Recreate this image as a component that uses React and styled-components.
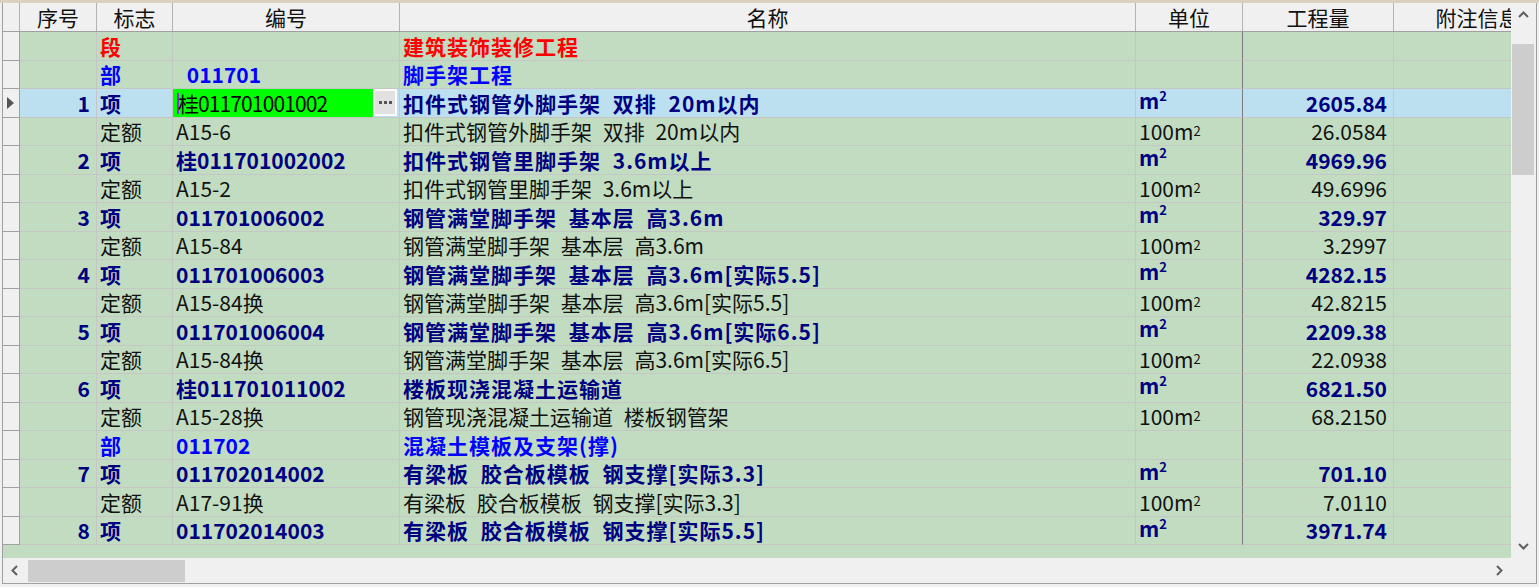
import React from "react";
import styled, { createGlobalStyle } from "styled-components";

const COLS = "17px 77px 76px 227px 736px 107px 151px 168px";

const GREEN = "#c1dcc1";
const BLUE_SEL = "#bde0f1";
const LINE = "#c6c6c6";

const Global = createGlobalStyle`
  html, body { margin: 0; padding: 0; background: #f0f0f0; }
  body { font-family: "Noto Sans CJK SC", "Noto Sans", sans-serif; }
  * { box-sizing: border-box; }
`;

const Frame = styled.div`
  width: 1539px;
  height: 587px;
  background: #f0f0f0;
  border-top: 3px solid #d9d2bf;
  padding: 0 2px 3px 2px;
  display: flex;
`;

const Inner = styled.div`
  flex: 1;
  border-left: 1px solid #a0a0a0;
  border-right: 1px solid #a0a0a0;
  border-bottom: 1px solid #a0a0a0;
  display: grid;
  grid-template-columns: 1fr 25px;
  grid-template-rows: 1fr 25px;
  min-width: 0;
`;

const Viewport = styled.div`
  background: ${GREEN};
  overflow: hidden;
  min-width: 0;
`;

const Table = styled.div`
  width: max-content;
`;

const HeaderRow = styled.div`
  display: grid;
  grid-template-columns: ${COLS};
  height: 29px;
  background: #f0f0f0;
  border-bottom: 1px solid #a0a0a0;
`;

const HeaderCell = styled.div`
  border-right: 1px solid #b4b4b4;
  display: flex;
  align-items: center;
  justify-content: center;
  font-size: 21px;
  color: #111;
  white-space: nowrap;
  overflow: hidden;
  line-height: 1;
  padding-top: 1px;
`;

const Row = styled.div`
  display: grid;
  grid-template-columns: ${COLS};
  height: ${(p) => p.$h}px;
  background: ${(p) => (p.$selected ? BLUE_SEL : GREEN)};
`;

const toneColor = {
  seg: "#ff0000",
  part: "#0000ff",
  item: "#000080",
  quota: "#111111",
};

const Cell = styled.div`
  border-right: 1px solid ${(p) => (p.$dark ? "#7a7a7a" : LINE)};
  border-bottom: 1px solid ${LINE};
  display: flex;
  align-items: ${(p) => (p.$top ? "flex-start" : "center")};
  justify-content: ${(p) => (p.$align === "right" ? "flex-end" : "flex-start")};
  padding: ${(p) => (p.$top ? "1px" : "0")} ${(p) => (p.$align === "right" ? "6px" : "3px")} 0 3px;
  font-size: 21px;
  line-height: 1;
  white-space: pre;
  word-spacing: 6px;
  overflow: hidden;
  color: ${(p) => toneColor[p.$tone] || "#000"};
  font-weight: ${(p) => (p.$tone === "quota" ? 400 : 700)};
  letter-spacing: ${(p) => (p.$spread && p.$tone !== "quota" ? "1px" : "0")};
`;

const IndicatorCell = styled.div`
  background: #f0f0f0;
  border-right: 1px solid #a0a0a0;
  border-bottom: 1px solid #a0a0a0;
  display: flex;
  align-items: center;
  padding-left: 4px;
`;

const HeaderIndicator = styled.div`
  border-right: 1px solid #b4b4b4;
`;

const Pointer = styled.span`
  width: 0;
  height: 0;
  border-top: 6px solid transparent;
  border-bottom: 6px solid transparent;
  border-left: 7px solid #555;
`;

const EditCell = styled.div`
  border-right: 1px solid ${LINE};
  border-bottom: 1px solid ${LINE};
  display: flex;
  align-items: stretch;
  padding-right: 2px;
`;

const EditBox = styled.div`
  width: 200px;
  background: #00ff00;
  display: flex;
  align-items: center;
  padding-left: 4px;
  font-size: 21px;
  line-height: 1;
  color: #000;
  white-space: pre;
  letter-spacing: -0.9px;
`;

const Caret = styled.span`
  display: inline-block;
  width: 2px;
  height: 21px;
  background: #8a2be2;
  margin-right: -1px;
`;

const EllipsisButton = styled.div`
  width: 24px;
  margin-bottom: 1px;
  background: #e1e1e1;
  border: 2px solid #fbfbfb;
  display: flex;
  align-items: center;
  justify-content: center;
  gap: 2px;
`;

const Dot = styled.span`
  width: 3px;
  height: 3px;
  background: #555;
`;

const Sup = styled.span`
  font-size: 0.62em;
  vertical-align: top;
  position: relative;
  top: -1px;
`;

const VScroll = styled.div`
  background: #f0f0f0;
  display: flex;
  flex-direction: column;
`;

const HScroll = styled.div`
  background: #f0f0f0;
  display: flex;
  align-items: stretch;
`;

const Corner = styled.div`
  background: #f0f0f0;
`;

const ArrowButton = styled.div`
  flex: 0 0 24px;
  width: ${(p) => (p.$horizontal ? "24px" : "auto")};
  height: ${(p) => (p.$horizontal ? "auto" : "24px")};
  display: flex;
  align-items: center;
  justify-content: center;
`;

const VTrack = styled.div`
  flex: 1;
  padding: 0 2px 0 1px;
`;

const VThumb = styled.div`
  margin-top: ${(p) => p.$offset}px;
  height: ${(p) => p.$size}px;
  background: #cdcdcd;
`;

const HTrack = styled.div`
  flex: 1;
  padding: 2px 0 1px 1px;
  display: flex;
`;

const HThumb = styled.div`
  margin-left: ${(p) => p.$offset}px;
  width: ${(p) => p.$size}px;
  background: #cdcdcd;
`;

const Chevron = ({ dir }) => {
  const pts = {
    up: "1,7 5.5,2.5 10,7",
    down: "1,3 5.5,7.5 10,3",
    left: "7,1 2.5,5.5 7,10",
    right: "3,1 7.5,5.5 3,10",
  }[dir];
  return (
    <svg width="11" height="11" viewBox="0 0 11 11">
      <polyline points={pts} fill="none" stroke="#606060" strokeWidth="2" />
    </svg>
  );
};

const rows = [
  { kind: "seg", flag: "段", name: "建筑装饰装修工程" },
  { kind: "part", flag: "部", code: " 011701", name: "脚手架工程" },
  { kind: "item", no: 1, flag: "项", code: "桂011701001002", name: "扣件式钢管外脚手架 双排 20m以内", qty: "2605.84", selected: true },
  { kind: "quota", flag: "定额", code: "A15-6", name: "扣件式钢管外脚手架 双排 20m以内", qty: "26.0584" },
  { kind: "item", no: 2, flag: "项", code: "桂011701002002", name: "扣件式钢管里脚手架 3.6m以上", qty: "4969.96" },
  { kind: "quota", flag: "定额", code: "A15-2", name: "扣件式钢管里脚手架 3.6m以上", qty: "49.6996" },
  { kind: "item", no: 3, flag: "项", code: "011701006002", name: "钢管满堂脚手架 基本层 高3.6m", qty: "329.97" },
  { kind: "quota", flag: "定额", code: "A15-84", name: "钢管满堂脚手架 基本层 高3.6m", qty: "3.2997" },
  { kind: "item", no: 4, flag: "项", code: "011701006003", name: "钢管满堂脚手架 基本层 高3.6m[实际5.5]", qty: "4282.15" },
  { kind: "quota", flag: "定额", code: "A15-84换", name: "钢管满堂脚手架 基本层 高3.6m[实际5.5]", qty: "42.8215" },
  { kind: "item", no: 5, flag: "项", code: "011701006004", name: "钢管满堂脚手架 基本层 高3.6m[实际6.5]", qty: "2209.38" },
  { kind: "quota", flag: "定额", code: "A15-84换", name: "钢管满堂脚手架 基本层 高3.6m[实际6.5]", qty: "22.0938" },
  { kind: "item", no: 6, flag: "项", code: "桂011701011002", name: "楼板现浇混凝土运输道", qty: "6821.50" },
  { kind: "quota", flag: "定额", code: "A15-28换", name: "钢管现浇混凝土运输道 楼板钢管架", qty: "68.2150" },
  { kind: "part", flag: "部", code: "011702", name: "混凝土模板及支架(撑)" },
  { kind: "item", no: 7, flag: "项", code: "011702014002", name: "有梁板 胶合板模板 钢支撑[实际3.3]", qty: "701.10" },
  { kind: "quota", flag: "定额", code: "A17-91换", name: "有梁板 胶合板模板 钢支撑[实际3.3]", qty: "7.0110" },
  { kind: "item", no: 8, flag: "项", code: "011702014003", name: "有梁板 胶合板模板 钢支撑[实际5.5]", qty: "3971.74" },
];

const headers = ["序号", "标志", "编号", "名称", "单位", "工程量", "附注信息"];

const Unit = ({ kind }) => {
  if (kind === "item")
    return (
      <>
        m<Sup>2</Sup>
      </>
    );
  if (kind === "quota")
    return (
      <>
        100m<Sup>2</Sup>
      </>
    );
  return null;
};

export default function App() {
  return (
    <>
      <Global />
      <Frame>
        <Inner>
          <Viewport>
            <Table>
              <HeaderRow>
                <HeaderIndicator />
                {headers.map((h) => (
                  <HeaderCell key={h}>{h}</HeaderCell>
                ))}
              </HeaderRow>
              {rows.map((r, i) => (
                <Row key={i} $h={i % 2 === 0 ? 29 : 28} $selected={r.selected}>
                  <IndicatorCell>{r.selected && <Pointer />}</IndicatorCell>
                  <Cell $tone={r.kind} $align="right">
                    {r.no ?? ""}
                  </Cell>
                  <Cell $tone={r.kind}>{r.flag}</Cell>
                  {r.selected ? (
                    <EditCell>
                      <EditBox>
                        <Caret />
                        {r.code}
                      </EditBox>
                      <EllipsisButton>
                        <Dot />
                        <Dot />
                        <Dot />
                      </EllipsisButton>
                    </EditCell>
                  ) : (
                    <Cell $tone={r.kind}>{r.code ?? ""}</Cell>
                  )}
                  <Cell $tone={r.kind} $spread>
                    {r.name}
                  </Cell>
                  <Cell $tone={r.kind} $dark $top={r.kind === "item"}>
                    <Unit kind={r.kind} />
                  </Cell>
                  <Cell $tone={r.kind} $align="right">
                    {r.qty ?? ""}
                  </Cell>
                  <Cell $tone={r.kind} />
                </Row>
              ))}
            </Table>
          </Viewport>
          <VScroll>
            <ArrowButton>
              <Chevron dir="up" />
            </ArrowButton>
            <VTrack>
              <VThumb $offset={17} $size={131} />
            </VTrack>
            <ArrowButton>
              <Chevron dir="down" />
            </ArrowButton>
          </VScroll>
          <HScroll>
            <ArrowButton $horizontal>
              <Chevron dir="left" />
            </ArrowButton>
            <HTrack>
              <HThumb $offset={0} $size={157} />
            </HTrack>
            <ArrowButton $horizontal>
              <Chevron dir="right" />
            </ArrowButton>
          </HScroll>
          <Corner />
        </Inner>
      </Frame>
    </>
  );
}
